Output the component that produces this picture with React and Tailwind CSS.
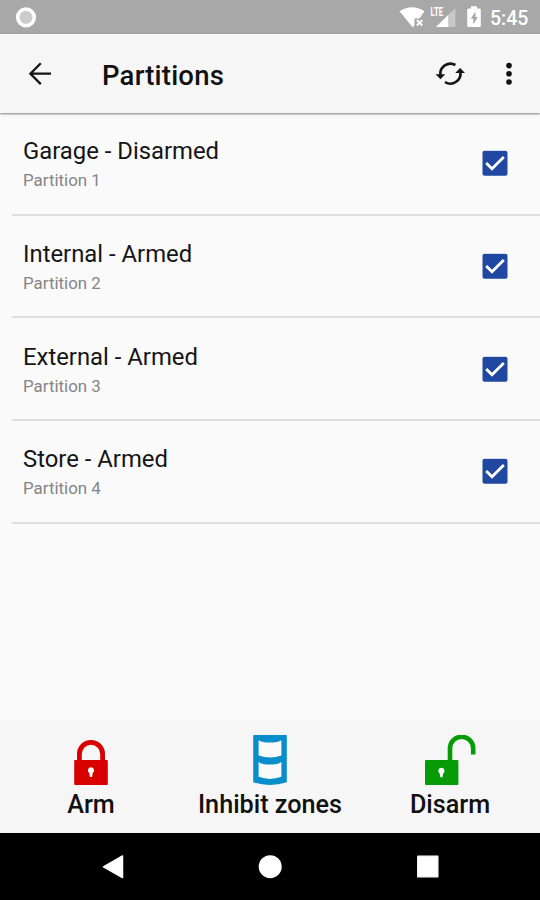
import React from "react";

const PARTITIONS = [
  { name: "Garage - Disarmed", label: "Partition 1" },
  { name: "Internal - Armed", label: "Partition 2" },
  { name: "External - Armed", label: "Partition 3" },
  { name: "Store - Armed", label: "Partition 4" },
];

function StatusBar() {
  return (
    <div className="flex h-[34px] shrink-0 items-center justify-between bg-[#a8a8a8] pl-[15px] pr-[11px] text-white">
      <svg className="h-[34px] w-[22px]" viewBox="0 0 22 34">
        <circle cx="11" cy="17.3" r="8.3" fill="#cccccc" stroke="#fff" strokeWidth="3.6" />
      </svg>
      <div className="flex items-center">
        <svg className="h-[34px] w-[91px]" viewBox="399 0 91 34">
          <path d="M399.5 11.2Q412 3.2 424.5 11.2L419.4 18.4H414.4V25.4L412.6 27.2Z" fill="#fff" />
          <path d="M416.9 20.1l5.4 5.4M422.3 20.1l-5.4 5.4" stroke="#fff" strokeWidth="1.9" />
          <path d="M436 27L455.4 8V27Z" fill="#c8c8c8" />
          <path d="M436 27L448.2 15V27Z" fill="#fff" />
          <text x="430.6" y="16" fill="#fff" fontSize="12.5" fontWeight="700" textLength="12.6" lengthAdjust="spacingAndGlyphs">LTE</text>
          <path d="M471 6.2h6v2.2h2.5q1.3 0 1.3 1.3v16q0 1.3-1.3 1.3h-11q-1.3 0-1.3-1.3v-16q0-1.3 1.3-1.3h2.5Z" fill="#fff" />
          <path d="M475.5 11.5l-4.8 7.3h2.6v5.5l4.6-7.3h-2.4Z" fill="#a8a8a8" />
        </svg>
        <span className="w-[39px] whitespace-nowrap text-[19.5px] leading-[34px] font-medium translate-y-[2px]">5:45</span>
      </div>
    </div>
  );
}

function Header() {
  return (
    <header className="z-10 flex h-[79px] shrink-0 items-center bg-[#f6f6f6] shadow-[0_1px_2px_rgba(0,0,0,0.5)]">
      <svg className="h-[79px] w-[102px]" viewBox="0 34 102 79" fill="none" stroke="#151515" strokeWidth="2.3">
        <path d="M51 73.7H30.5M40.8 63.3L30.4 73.7L40.8 84.1" />
      </svg>
      <h1 className="flex-1 text-[27.5px] leading-[32px] font-medium tracking-[0.2px] text-[#111] translate-y-[2px]">Partitions</h1>
      <svg className="h-[79px] w-[110px]" viewBox="430 34 110 79">
        <g fill="none" stroke="#151515" strokeWidth="2.6">
          <path d="M440.4 75A10.1 10.1 0 0 1 455.4 65" />
          <path d="M460.3 71.5A10.1 10.1 0 0 1 445 82" />
        </g>
        <path d="M435.6 74.2H445.2L440.5 79.2ZM455.2 73L460.1 68L465 73Z" fill="#151515" />
        <g fill="#111">
          <circle cx="509" cy="65.6" r="2.8" />
          <circle cx="509" cy="73.8" r="2.8" />
          <circle cx="509" cy="82" r="2.8" />
        </g>
      </svg>
    </header>
  );
}

function PartitionRow({ name, label }) {
  return (
    <li className="ml-3 flex h-[102.7px] items-center border-b-2 border-[#dedede] pl-[11px] pr-[32px]">
      <div className="flex-1">
        <div className="text-[23.85px] leading-[30px] text-[#151515]">{name}</div>
        <div className="text-[16.9px] leading-[24px] text-[#858585] translate-y-[2px]">{label}</div>
      </div>
      <svg className="h-[26px] w-[26px] translate-y-[0.3px]" viewBox="0 0 26 26" role="checkbox" aria-checked="true">
        <rect x="0.5" y="0.5" width="25" height="25" rx="2" fill="#2148a0" />
        <path d="M4.2 12.7L10 18.5L21.8 6.6" fill="none" stroke="#fff" strokeWidth="2.8" />
      </svg>
    </li>
  );
}

function Action({ label, children }) {
  return (
    <button className="flex flex-col items-center">
      <svg className="h-[50px] w-[52px] shrink-0" viewBox="0 0 52 50">{children}</svg>
      <span className="mt-[5px] whitespace-nowrap text-[25.2px] leading-[30px] font-medium text-[#111]">{label}</span>
    </button>
  );
}

export default function App() {
  return (
    <div className="flex h-[900px] w-[540px] flex-col overflow-hidden bg-[#fafafa] font-['Roboto',sans-serif]">
      <StatusBar />
      <Header />
      <ul className="flex-1">
        {PARTITIONS.map((p) => (
          <PartitionRow key={p.label} {...p} />
        ))}
      </ul>
      <footer className="grid h-[113px] shrink-0 grid-cols-[182px_176px_184px] items-start bg-[#f6f6f6] pt-[15px]">
        <Action label="Arm">
          <path d="M14.4 27V19a11.6 11.6 0 0 1 23.2 0V27" fill="none" stroke="#d90000" strokeWidth="4.8" />
          <rect x="9.2" y="25" width="33.6" height="25" rx="1" fill="#d90000" />
          <path d="M26 32.2a3.1 3.1 0 0 1 1.7 5.7L27.1 42h-2.2l-.6-4.1A3.1 3.1 0 0 1 26 32.2Z" fill="#fff" />
        </Action>
        <Action label="Inhibit zones">
          <path d="M9.2 0.9q0-1 1-1h31.6q1 0 1 1v46.4Q26 52.6 9.2 47.3Z" fill="#098dcb" />
          <path d="M14.6 5.2Q18 7.6 26 7.6T37.4 5.2V20.4Q26 24.4 14.6 20.4ZM14.6 26.9Q18 29.6 26 29.6T37.4 26.9V41.8Q26 46 14.6 41.8Z" fill="#fafafa" />
        </Action>
        <Action label="Disarm">
          <rect x="1" y="25" width="33.4" height="25" rx="1" fill="#089b08" />
          <path d="M26 27V13.4a11.6 11.6 0 0 1 23.2 0V19.5" fill="none" stroke="#089b08" strokeWidth="4.6" />
          <path d="M17.4 32.7a3.1 3.1 0 0 1 1.7 5.7L18.5 42.3h-2.2l-.6-3.9A3.1 3.1 0 0 1 17.4 32.7Z" fill="#fff" />
        </Action>
      </footer>
      <nav className="h-[67px] shrink-0 bg-black">
        <svg className="h-[67px] w-[540px]" viewBox="0 833 540 67" fill="#fff" stroke="#fff" strokeLinejoin="round">
          <path d="M103.5 866.8L122.5 856V877.6Z" strokeWidth="1.5" />
          <circle cx="270.2" cy="866.7" r="11.5" stroke="none" />
          <rect x="417.7" y="856.2" width="20.2" height="20.6" strokeWidth="1.2" />
        </svg>
      </nav>
    </div>
  );
}
